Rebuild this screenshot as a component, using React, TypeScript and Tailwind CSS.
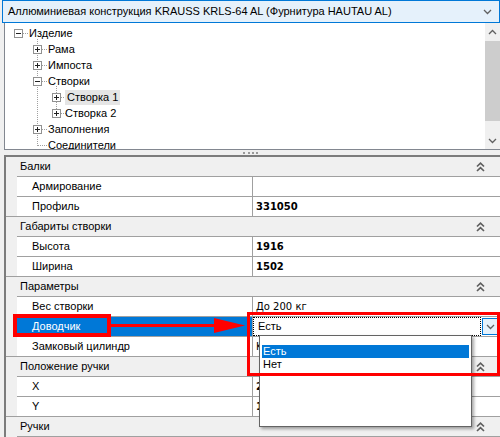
import React from "react";

type Row =
  | { kind: "cat"; label: string }
  | {
      kind: "prop";
      label: string;
      value?: string;
      bold?: boolean;
      last?: boolean;
      selected?: boolean;
    };

const rows: Row[] = [
  { kind: "cat", label: "Балки" },
  { kind: "prop", label: "Армирование" },
  { kind: "prop", label: "Профиль", value: "331050", bold: true, last: true },
  { kind: "cat", label: "Габариты створки" },
  { kind: "prop", label: "Высота", value: "1916", bold: true },
  { kind: "prop", label: "Ширина", value: "1502", bold: true, last: true },
  { kind: "cat", label: "Параметры" },
  { kind: "prop", label: "Вес створки", value: "До 200 кг" },
  { kind: "prop", label: "Доводчик", selected: true },
  { kind: "prop", label: "Замковый цилиндр", value: "Kale", last: true },
  { kind: "cat", label: "Положение ручки" },
  { kind: "prop", label: "X", value: "200", bold: true },
  { kind: "prop", label: "Y", value: "1000", bold: true, last: true },
  { kind: "cat", label: "Ручки" },
];

type TreeItem = { label: string; level: 0 | 1 | 2; selected?: boolean };

const tree: TreeItem[] = [
  { label: "Изделие", level: 0 },
  { label: "Рама", level: 1 },
  { label: "Импоста", level: 1 },
  { label: "Створки", level: 1 },
  { label: "Створка 1", level: 2, selected: true },
  { label: "Створка 2", level: 2 },
  { label: "Заполнения", level: 1 },
  { label: "Соединители", level: 1 },
];

// expander boxes in tree-local pixels: [centerX, centerY, expanded]
const boxes: [number, number, boolean][] = [
  [13, 10, true],
  [32, 26, false],
  [32, 42, false],
  [32, 58, true],
  [51, 74, false],
  [51, 90, false],
  [32, 106, false],
];

function Chevron({ up = false }: { up?: boolean }) {
  return (
    <svg width="9" height="6" viewBox="0 0 9 6">
      <polyline
        points={up ? "1,5 4.5,1.5 8,5" : "1,1 4.5,4.5 8,1"}
        fill="none"
        stroke="#606060"
        strokeWidth="1.3"
      />
    </svg>
  );
}

function DoubleUp() {
  return (
    <svg width="9" height="10" viewBox="0 0 9 10">
      <polyline points="1,4.5 4.5,1.2 8,4.5" fill="none" stroke="#5f5f5f" strokeWidth="1.7" />
      <polyline points="1,9 4.5,5.7 8,9" fill="none" stroke="#5f5f5f" strokeWidth="1.7" />
    </svg>
  );
}

function TreeLines() {
  return (
    <svg className="absolute left-0 top-0" width="480" height="126">
      <g stroke="#a0a0a0" strokeDasharray="1 1" strokeWidth="1">
        <line x1="18" y1="10.5" x2="23" y2="10.5" />
        <line x1="32.5" y1="16" x2="32.5" y2="123" />
        <line x1="51.5" y1="63" x2="51.5" y2="91" />
        {[26, 42, 58, 106].map((y) => (
          <line key={y} x1="37" y1={y + 0.5} x2="42" y2={y + 0.5} />
        ))}
        <line x1="33" y1="122.5" x2="42" y2="122.5" />
        {[74, 90].map((y) => (
          <line key={y} x1="56" y1={y + 0.5} x2="61" y2={y + 0.5} />
        ))}
      </g>
      {boxes.map(([cx, cy, open]) => (
        <g key={`${cx}-${cy}`}>
          <rect x={cx - 3.5} y={cy - 3.5} width="8" height="8" fill="#fff" stroke="#919191" />
          <line x1={cx - 2} y1={cy + 0.5} x2={cx + 3} y2={cy + 0.5} stroke="#222" />
          {!open && <line x1={cx + 0.5} y1={cy - 2} x2={cx + 0.5} y2={cy + 3} stroke="#222" />}
        </g>
      ))}
    </svg>
  );
}

export default function App() {
  return (
    <div className="relative w-[500px] h-[437px] overflow-hidden bg-[#f0f0f0] text-[11px] text-black font-['Liberation_Sans',Arial,sans-serif]">
      {/* product selector */}
      <div className="ml-[2px] h-[23px] flex items-center justify-between border border-[#0078d7] bg-[#e5f1fb] pl-[5px] pr-[7px]">
        <span>Аллюминиевая конструкция KRAUSS KRLS-64 AL (Фурнитура HAUTAU AL)</span>
        <Chevron />
      </div>

      {/* tree */}
      <div className="ml-[4px] h-[127px] flex border-l border-b border-[#828790] bg-white">
        <div className="relative flex-1 overflow-hidden pt-[2px]">
          <TreeLines />
          {tree.map((t) => (
            <div
              key={t.label}
              className={`relative h-[16px] flex items-center leading-none ${
                t.level === 0 ? "pl-[24px]" : t.level === 1 ? "pl-[43px]" : "pl-[60px]"
              }`}
            >
              {t.selected ? (
                <span className="h-[15px] flex items-center px-[2px] bg-[#e5e5e5]">{t.label}</span>
              ) : (
                <span>{t.label}</span>
              )}
            </div>
          ))}
        </div>
        <div className="w-[15px] flex flex-col bg-[#f0f0f0]">
          <div className="h-[17px] flex items-center justify-center">
            <Chevron up />
          </div>
          <div className="flex-1">
            <div className="mt-[1px] h-[80px] bg-[#cdcdcd]" />
          </div>
          <div className="h-[17px] flex items-center justify-center">
            <Chevron />
          </div>
        </div>
      </div>

      {/* splitter */}
      <div className="h-[5px] flex items-center justify-center">
        <div className="w-[15px] border-t-2 border-dotted border-[#9a9a9a]" />
      </div>

      {/* property grid */}
      <div className="ml-[4px] border-l-2 border-t-2 border-[#7c7c7c]">
        {rows.map((r) =>
          r.kind === "cat" ? (
            <div key={r.label} className="flex h-[20px] bg-[#f0f0f0]">
              <div className="w-[11px]" />
              <div className="flex-1 flex items-center justify-between border-b border-[#a0a0a0] pl-[3px] pr-[15px]">
                <span>{r.label}</span>
                <DoubleUp />
              </div>
            </div>
          ) : (
            <div key={r.label} className="flex h-[20px]">
              <div className={`w-[11px] bg-[#f0f0f0] ${r.last ? "border-b border-[#a0a0a0]" : ""}`} />
              <div className="flex-1 flex border-b border-[#a0a0a0] bg-white">
                <div
                  className={`w-[236px] flex items-center border-r border-[#a0a0a0] pl-[15px] ${
                    r.selected ? "bg-[#0078d7] text-white" : ""
                  }`}
                >
                  {r.label}
                </div>
                {r.selected ? (
                  <div className="flex-1 flex items-center">
                    <div className="flex-1 h-full flex items-center border border-dotted border-black pl-[4px]">
                      Есть
                    </div>
                    <div className="w-[17px] h-[17px] mx-[1px] flex items-center justify-center border border-[#0078d7] bg-[#e5f1fb]">
                      <Chevron />
                    </div>
                  </div>
                ) : (
                  <div
                    className={`flex-1 flex items-center pl-[3px] text-[10px] font-['DejaVu_Sans',sans-serif] ${
                      r.bold ? "font-bold" : ""
                    }`}
                  >
                    {r.value}
                  </div>
                )}
              </div>
            </div>
          )
        )}
      </div>

      {/* open dropdown list */}
      <div className="absolute left-[259px] top-[335px] w-[213px] h-[92px] border border-[#646464] bg-white pt-[9px] px-[2px] leading-none shadow-[2px_2px_3px_rgba(0,0,0,0.35)]">
        <div className="h-[13px] flex items-center pl-[1px] bg-[#0078d7] text-white">Есть</div>
        <div className="h-[13px] flex items-center pl-[1px]">Нет</div>
      </div>

      {/* annotations */}
      <div className="absolute left-[13px] top-[314px] w-[98px] h-[23px] border-4 border-[#ff0000]" />
      <div className="absolute left-[247px] top-[312px] w-[253px] h-[64px] border-[3px] border-[#ff0000]" />
      <svg className="absolute left-[108px] top-[314px]" width="140" height="22" viewBox="0 0 140 22">
        <rect x="3" y="10" width="108" height="3" fill="#ff0000" />
        <polygon points="106,4 137,11.5 106,19" fill="#ff0000" />
      </svg>
    </div>
  );
}
